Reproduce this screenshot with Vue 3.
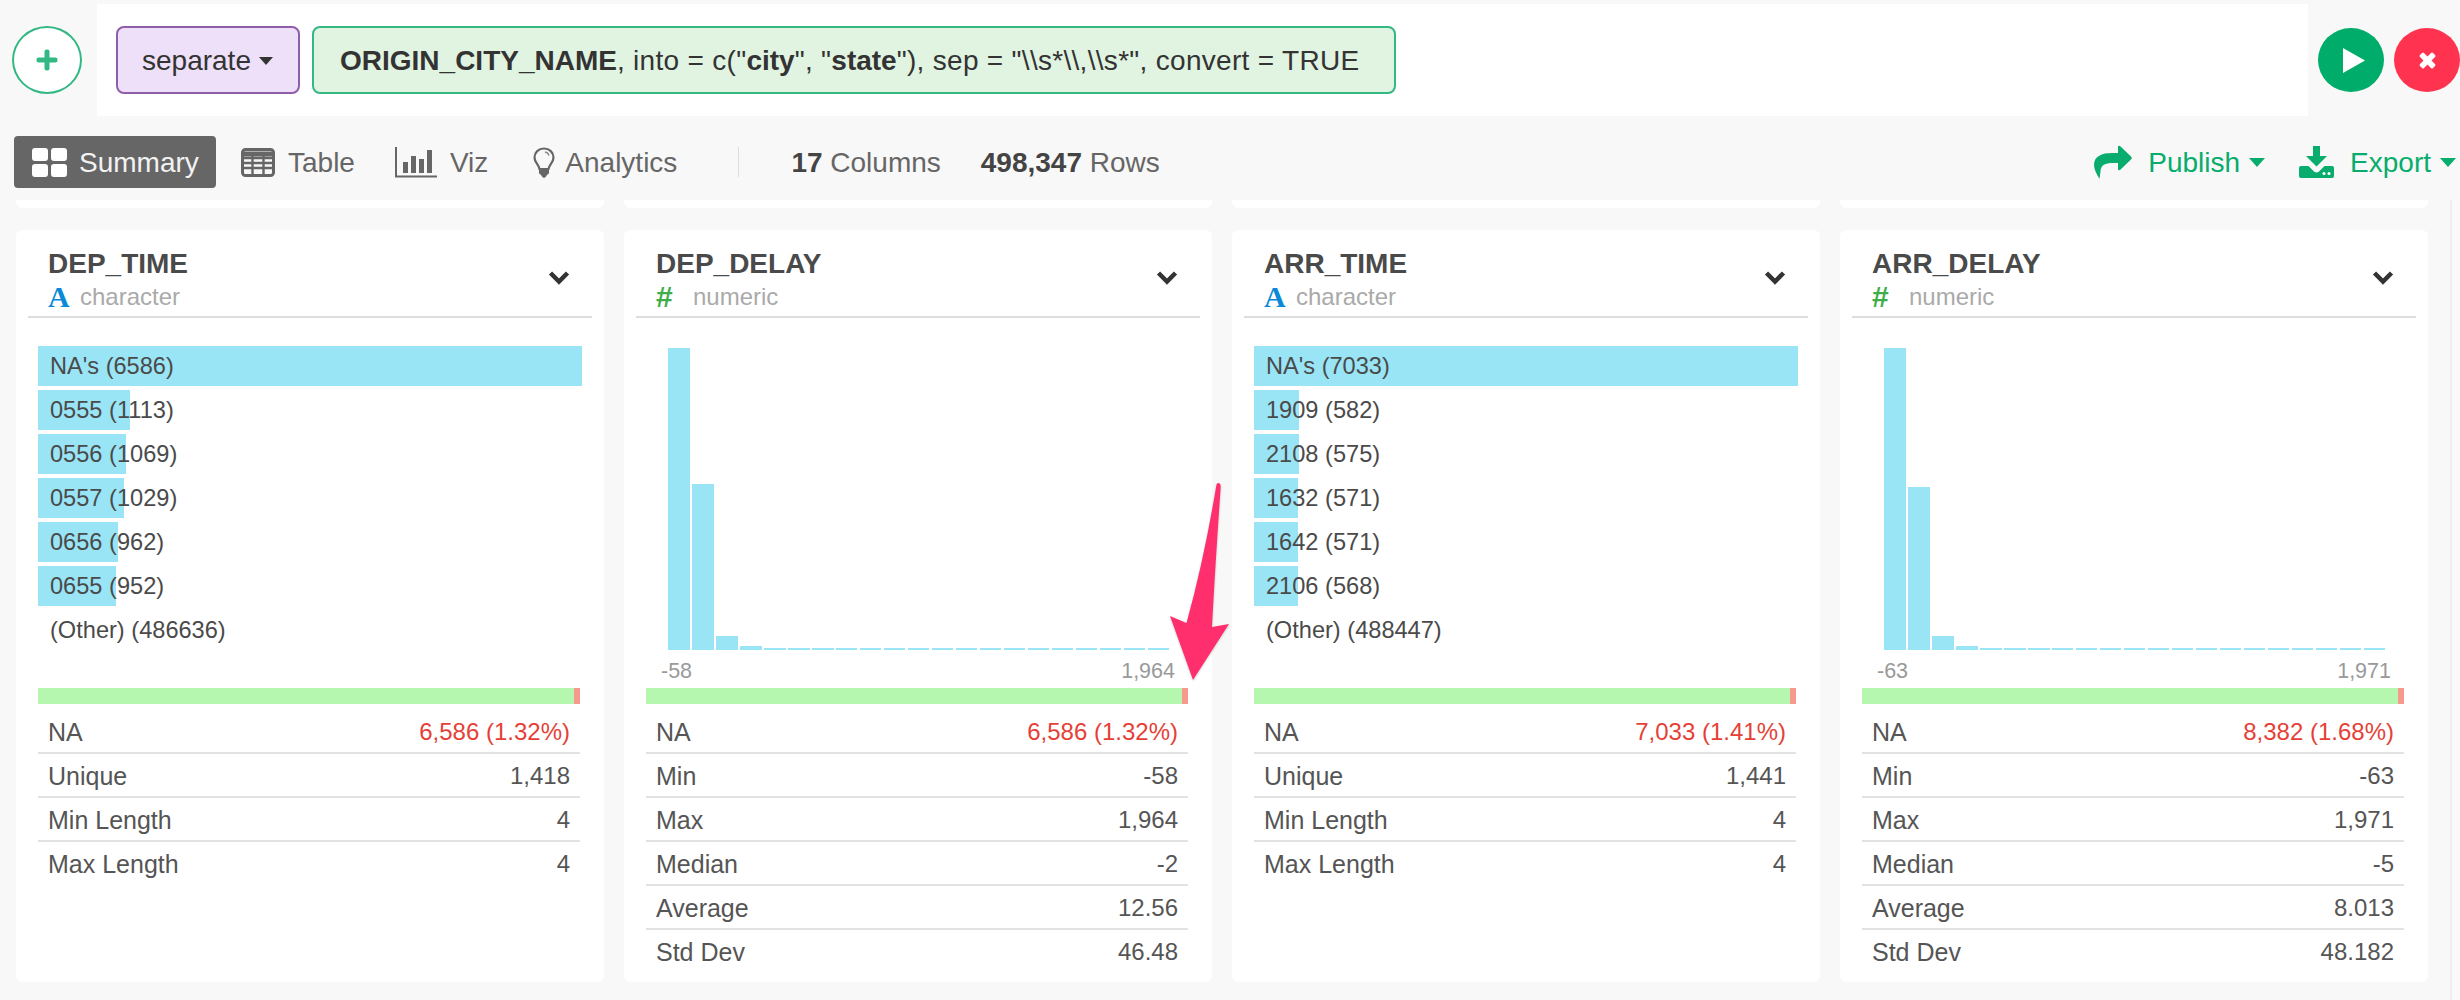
<script setup>
const cards = [
  { name: 'DEP_TIME', type: 'character', na: '6,586 (1.32%)', cats: [['NA\'s (6586)', 544], ['0555 (1113)', 92], ['0556 (1069)', 88], ['0557 (1029)', 86], ['0656 (962)', 80], ['0655 (952)', 78], ['(Other) (486636)', 0]],
    rows: [['Unique', '1,418'], ['Min Length', '4'], ['Max Length', '4']] },
  { name: 'DEP_DELAY', type: 'numeric', na: '6,586 (1.32%)', hist: [302, 166, 14, 4], lo: '-58', hi: '1,964',
    rows: [['Min', '-58'], ['Max', '1,964'], ['Median', '-2'], ['Average', '12.56'], ['Std Dev', '46.48']] },
  { name: 'ARR_TIME', type: 'character', na: '7,033 (1.41%)', cats: [['NA\'s (7033)', 544], ['1909 (582)', 45], ['2108 (575)', 45], ['1632 (571)', 44], ['1642 (571)', 44], ['2106 (568)', 44], ['(Other) (488447)', 0]],
    rows: [['Unique', '1,441'], ['Min Length', '4'], ['Max Length', '4']] },
  { name: 'ARR_DELAY', type: 'numeric', na: '8,382 (1.68%)', hist: [302, 163, 14, 4], lo: '-63', hi: '1,971',
    rows: [['Min', '-63'], ['Max', '1,971'], ['Median', '-5'], ['Average', '8.013'], ['Std Dev', '48.182']] },
]
const histBars = (h) => Array.from({ length: 21 }, (_, i) => (i < h.length ? h[i] : 2))
</script>

<template>
  <div class="page">
    <header class="top">
      <div class="add-wrap">
        <button class="add">
          <svg width="22" height="22" viewBox="0 0 22 22"><path d="M8.5 2.5Q8.5 0.5 10.5 0.5H11.5Q13.5 0.5 13.5 2.5V8.5H19.5Q21.5 8.5 21.5 10.5V11.5Q21.5 13.5 19.5 13.5H13.5V19.5Q13.5 21.5 11.5 21.5H10.5Q8.5 21.5 8.5 19.5V13.5H2.5Q0.5 13.5 0.5 11.5V10.5Q0.5 8.5 2.5 8.5H8.5Z" fill="#33b884"/></svg>
        </button>
      </div>
      <div class="cmd">
        <div class="verb"><span class="verb-text">separate</span><span class="caret dark"></span></div>
        <div class="args"><b>ORIGIN_CITY_NAME</b>, into = c("<b>city</b>", "<b>state</b>"), sep = "\\s*\\,\\s*", convert = TRUE</div>
      </div>
      <div class="run">
        <button class="round go">
          <svg width="22" height="25" viewBox="0 0 22 25"><path d="M0 0L22 12.5L0 25Z" fill="#fff"/></svg>
        </button>
        <button class="round stop">
          <svg width="19" height="19" viewBox="0 0 19 19"><path d="M9.5 5.5L13 2Q14 1 15 2L17 4Q18 5 17 6L13.500 9.500L17 13Q18 14 17 15L15 17Q14 18 13 17L9.500 13.500L6 17Q5 18 4 17L2 15Q1 14 2 13L5.500 9.500L2 6Q1 5 2 4L4 2Q5 1 6 2Z" fill="#fff"/></svg>
        </button>
      </div>
    </header>

    <nav class="bar">
      <div class="tab active">
        <svg width="35" height="29" viewBox="0 0 35 29"><g fill="#fff"><rect width="16" height="13" rx="3"/><rect x="19" width="16" height="13" rx="3"/><rect y="16" width="16" height="13" rx="3"/><rect x="19" y="16" width="16" height="13" rx="3"/></g></svg>
        <span>Summary</span>
      </div>
      <div class="tab">
        <svg width="34" height="29" viewBox="0 0 34 29"><rect x="1.500" y="1.500" width="31" height="26" rx="3" fill="none" stroke="#666" stroke-width="3"/><path d="M1 10H33M1 15H33M1 20H33M11.500 8V28M22.500 8V28" stroke="#666" stroke-width="2.400"/><path d="M1 6H33" stroke="#666" stroke-width="5"/></svg>
        <span>Table</span>
      </div>
      <div class="tab viz">
        <svg width="42" height="31" viewBox="0 0 42 31"><path d="M1 0V29.500H42" fill="none" stroke="#666" stroke-width="2"/><g fill="#666"><rect x="8" y="15" width="5" height="11"/><rect x="16" y="9" width="5" height="17"/><rect x="24" y="12" width="5" height="14"/><rect x="32" y="3" width="5" height="23"/></g></svg>
        <span>Viz</span>
      </div>
      <div class="tab bulb">
        <svg width="22" height="31" viewBox="0 0 22 31"><path d="M11 1.500C5.500 1.500 1.500 5.500 1.500 10.500C1.500 15.500 5.500 17 6.500 22H15.500C16.500 17 20.500 15.500 20.500 10.500C20.500 5.500 16.500 1.500 11 1.500Z" fill="none" stroke="#666" stroke-width="2.200"/><path d="M12 5C14 5.300 15.500 6.500 16 8.500" fill="none" stroke="#888" stroke-width="1.300"/><path d="M6 21H16V26.500Q14.500 27 14 28Q12.500 31 11 31Q9.500 31 8 28Q7.500 27 6 26.500Z" fill="#666"/></svg>
        <span>Analytics</span>
      </div>
      <i class="sep"></i>
      <div class="stat"><b>17</b> Columns</div>
      <div class="stat second"><b>498,347</b> Rows</div>
      <div class="spring"></div>
      <div class="link">
        <svg width="38" height="34" viewBox="0 0 38 34"><path d="M24 2Q24 0 26 1L37 11.500Q38.500 13 37 14.500L26 25Q24 26 24 24V18H19C11 18 7 20 6.500 26C6.300 29 5.500 34 5.500 34C2.500 29 0 24 0 20C0 11 8 8 18 8H24Z" fill="#08ac6c"/></svg>
        <span>Publish</span><span class="caret"></span>
      </div>
      <div class="link export">
        <svg width="35" height="32" viewBox="0 0 35 32"><path d="M14 0H21V10H28L17.500 20.500L7 10H14Z" fill="#08ac6c"/><path d="M2 20H9.500L15 25.500Q17.500 27.500 20 25.500L25.500 20H33Q35 20 35 22V30Q35 32 33 32H2Q0 32 0 30V22Q0 20 2 20Z" fill="#08ac6c"/><circle cx="25" cy="27.500" r="1.500" fill="#fff"/><circle cx="30" cy="27.500" r="1.500" fill="#fff"/></svg>
        <span>Export</span><span class="caret"></span>
      </div>
    </nav>

    <main class="content">
      <div class="grid">
        <div v-for="c in cards" :key="c.name + '-stub'" class="stub"></div>
        <section v-for="c in cards" :key="c.name" class="card">
          <div class="head">
            <div>
              <div class="title">{{ c.name }}</div>
              <div class="type">
                <span v-if="c.type === 'character'" class="t-a">A</span>
                <span v-else class="t-n">#</span>
                {{ c.type }}
              </div>
            </div>
            <svg class="chev" width="22" height="15" viewBox="0 0 22 15"><path d="M2.500 3L11 11.500L19.500 3" fill="none" stroke="#333" stroke-width="4.500"/></svg>
          </div>
          <div class="viz-area">
            <ul v-if="c.cats" class="cats">
              <li v-for="r in c.cats" :key="r[0]" class="cat">
                <span class="fill" :style="{ width: r[1] + 'px' }"></span>
                <span class="cat-text">{{ r[0] }}</span>
              </li>
            </ul>
            <div v-else class="hist">
              <div class="hist-bars">
                <span v-for="(h, i) in histBars(c.hist)" :key="i" :style="{ height: h + 'px' }"></span>
              </div>
              <div class="hist-axis"><span>{{ c.lo }}</span><span>{{ c.hi }}</span></div>
            </div>
          </div>
          <div class="meter"><span></span></div>
          <div class="stats">
            <div class="row"><span class="label">NA</span><span class="red">{{ c.na }}</span></div>
            <div v-for="r in c.rows" :key="r[0]" class="row"><span class="label">{{ r[0] }}</span><span>{{ r[1] }}</span></div>
          </div>
        </section>
      </div>
      <div class="scrollbar"></div>
    </main>

    <svg class="pointer" width="70" height="208" viewBox="1165 478 70 208">
      <path d="M1216.500 484.500Q1218 482 1220 484Q1221 485 1220.500 490Q1215 570 1212 627L1229 624L1193 680L1170 616L1186.500 623Q1204 560 1216.500 484.500Z" fill="#ff2f6e"/>
    </svg>
  </div>
</template>

<style>
html, body { margin: 0; background: #f8f8f8; }
</style>

<style scoped>
.page { position: relative; width: 2460px; height: 1000px; overflow: hidden; background: #f8f8f8; font-family: "Liberation Sans", Arial, sans-serif; color: #333; }
button { padding: 0; cursor: pointer; }

.top { display: flex; height: 112px; padding-top: 4px; }
.add-wrap { width: 97px; display: flex; align-items: center; flex: none; padding-left: 12px; box-sizing: border-box; }
.add { width: 70px; height: 68px; border-radius: 50%; border: 2px solid #33b884; background: #fff; display: flex; align-items: center; justify-content: center; }
.cmd { flex: 1; background: #fff; display: flex; align-items: center; gap: 12px; padding: 0 0 0 19px; box-sizing: border-box; }
.verb, .args { height: 68px; box-sizing: border-box; border-radius: 8px; border: 2px solid; font-size: 28px; white-space: pre; line-height: 66px; }
.verb { width: 184px; background: #eee0f8; border-color: #8e5fa8; padding-left: 24px; display: flex; align-items: center; }
.verb-text { padding-top: 2px; line-height: 40px; }
.args { background: #e1f3e1; border-color: #33b884; padding: 0 35px 0 26px; letter-spacing: .3px; }
.args b { letter-spacing: 0; }
.run { flex: none; width: 152px; display: flex; align-items: center; gap: 10px; padding-left: 10px; box-sizing: border-box; }
.round { width: 66px; height: 64px; border: 0; border-radius: 50%; display: flex; align-items: center; justify-content: center; }
.go { background: #00ac69; }
.go svg { margin-left: 6px; }
.stop { background: #ff3350; }

.caret { display: inline-block; margin-left: 9px; width: 0; height: 0; border: 8px solid transparent; border-top: 9px solid #08ac6c; border-bottom: 0; }
.caret.dark { border-top-color: #333; border-width: 8px 7px 0; margin-left: 8px; margin-top: 2px; }

.bar { height: 84px; display: flex; align-items: center; padding-left: 14px; padding-top: 8px; box-sizing: border-box; font-size: 28px; color: #666; }
.tab { display: flex; align-items: center; gap: 13px; height: 52px; margin-right: 14px; }
.tab > span, .stat, .link > span:not(.caret) { padding-top: 2px; }
.tab.active { background: #666; color: #f2f2f2; width: 202px; box-sizing: border-box; padding-left: 18px; border-radius: 4px; gap: 12px; margin-right: 25px; }
.tab.viz { margin-left: 26px; margin-right: 31px; }
.tab.bulb { gap: 10px; margin-left: 14px; }
.sep { width: 1px; height: 30px; background: #ddd; margin-left: 47px; margin-right: 52px; }
.stat b { color: #444; }
.stat.second { margin-left: 40px; }
.spring { flex: 1; }
.link { display: flex; align-items: center; color: #08ac6c; margin-right: 34px; }
.link svg { margin-right: 16px; }
.link.export { margin-right: 4px; }

.content { position: relative; height: 800px; }
.grid { display: grid; grid-template-columns: repeat(4, 588px); column-gap: 20px; padding-left: 16px; }
.stub { height: 8px; background: #fff; border-radius: 0 0 6px 6px; margin-bottom: 22px; }
.card { height: 752px; background: #fff; border-radius: 6px; box-sizing: border-box; padding-top: 18px; }
.head { height: 70px; box-sizing: border-box; margin: 0 12px; padding: 0 23px 0 20px; border-bottom: 2px solid #ddd; display: flex; justify-content: space-between; position: relative; }
.title { font-size: 28px; font-weight: 700; color: #4a4a4a; line-height: 32px; }
.type { font-size: 24px; color: #aaa; line-height: 34px; white-space: nowrap; display: flex; align-items: center; }
.t-a { font-family: "Liberation Serif", serif; font-weight: 700; color: #0a8ad6; font-size: 30px; width: 32px; }
.t-n { font-weight: 700; color: #3fae4a; font-size: 30px; width: 37px; }
.chev { margin-top: 22px; margin-right: -1px; }

.viz-area { height: 370px; box-sizing: border-box; padding: 28px 0 0 22px; }
.cats { list-style: none; margin: 0; padding: 0; width: 544px; }
.cat { position: relative; height: 40px; margin-bottom: 4px; line-height: 40px; font-size: 23.600px; color: #4a4a4a; white-space: nowrap; }
.fill { position: absolute; left: 0; top: 0; bottom: 0; background: #99e5f5; }
.cat-text { position: relative; padding-left: 12px; }
.hist { padding-top: 2px; }
.hist-bars { height: 302px; display: flex; align-items: flex-end; gap: 2.400px; padding-left: 22px; }
.hist-bars span { width: 21.600px; background: #99e5f5; display: block; }
.hist-axis { display: flex; justify-content: space-between; width: 514px; padding-left: 15px; font-size: 21.500px; color: #999; line-height: 42px; }

.meter { margin: 0 0 0 22px; width: 542px; height: 16px; background: #b5f7ae; display: flex; justify-content: flex-end; }
.meter span { width: 6px; background: #f59a8f; }
.stats { margin-left: 22px; width: 542px; }
.row { height: 44px; box-sizing: border-box; padding: 2px 10px 0; border-bottom: 2px solid #e2e2e2; display: flex; justify-content: space-between; align-items: center; font-size: 24px; color: #555; }
.row:first-child { height: 50px; padding-top: 8px; }
.row:last-child { border-bottom: 0; padding-bottom: 2px; }
.label { font-size: 25px; }
.red { color: #e53f38; }

.scrollbar { position: absolute; left: 2450px; top: 0; bottom: 0; width: 10px; background: #f9f9f9; border-left: 2px solid #eee; box-sizing: border-box; }
.pointer { position: absolute; left: 1165px; top: 478px; filter: drop-shadow(0 1px 1px rgba(0,0,0,.2)); }
</style>
